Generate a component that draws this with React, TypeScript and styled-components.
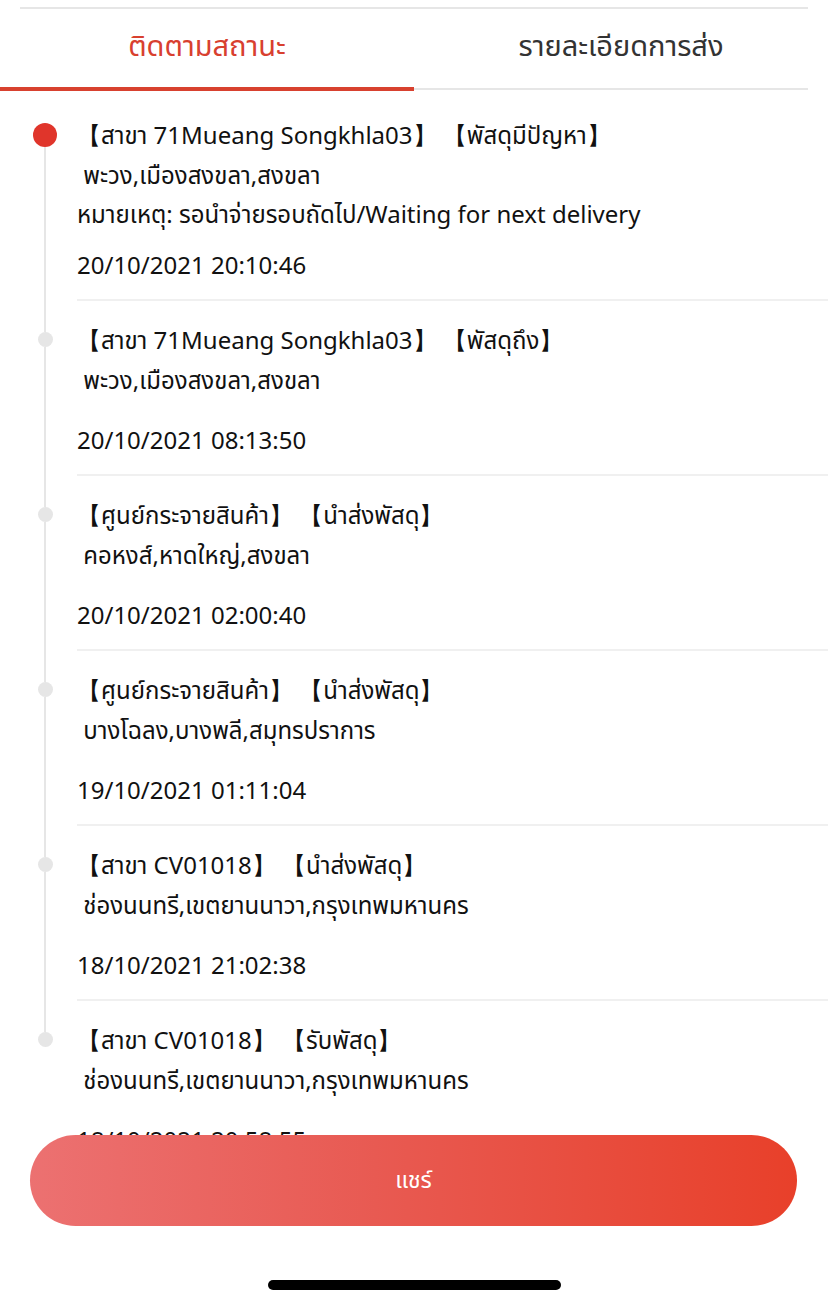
import React from 'react';
import styled, {createGlobalStyle} from 'styled-components';

const GlobalStyle = createGlobalStyle`
  html, body {
    margin: 0;
    padding: 0;
    background: #fff;
  }
  body {
    font-family: "Noto Sans", "Noto Sans Thai", "Liberation Sans", sans-serif;
    color: #111;
  }
`;

const Page = styled.div`
  position: relative;
  width: 828px;
  height: 1305px;
  overflow: hidden;
  background: #fff;
  display: flex;
  flex-direction: column;
`;

const TopRule = styled.div`
  height: 2px;
  margin: 7px 20px 0 20px;
  background: #e6e6e6;
`;

const Tabs = styled.div`
  display: flex;
  height: 78px;
`;

const Tab = styled.div<{ $active?: boolean }>`
  flex: 1;
  display: flex;
  align-items: center;
  justify-content: center;
  padding-bottom: 2px;
  font-size: 29px;
  color: ${p => (p.$active ? '#d8402f' : '#333')};
`;

const Indicator = styled.div`
  display: flex;
  align-items: center;
  height: 4px;
`;

const ActiveBar = styled.div`
  width: 50%;
  height: 4px;
  background: #d8412f;
`;

const RestBar = styled.div`
  flex: 1;
  height: 2px;
  margin-right: 20px;
  background: #e6e6e6;
`;

const List = styled.div`
  flex: 1;
  overflow: hidden;
  padding-top: 5px;
`;

const Row = styled.div`
  display: flex;
`;

const Rail = styled.div<{ $first?: boolean; $last?: boolean; $big?: boolean }>`
  width: 64px;
  padding-left: 13px;
  display: flex;
  flex-direction: column;
  align-items: center;
  flex-shrink: 0;

  > .up {
    width: 2px;
    height: ${p => (p.$big ? 27 : 31)}px;
    background: ${p => (p.$first ? 'transparent' : '#e6e6e6')};
  }

  > .down {
    width: 2px;
    flex: 1;
    background: ${p => (p.$last ? 'transparent' : '#e6e6e6')};
  }
`;

const Dot = styled.div<{ $current?: boolean }>`
  width: ${p => (p.$current ? 24 : 15)}px;
  height: ${p => (p.$current ? 24 : 15)}px;
  border-radius: 50%;
  background: ${p => (p.$current ? '#e0352b' : '#e6e6e6')};
  flex-shrink: 0;
`;

const Body = styled.div<{ $last?: boolean }>`
  flex: 1;
  padding: 19px 0 14px 0;
  border-bottom: 2px solid ${p => (p.$last ? 'transparent' : '#f0f0f0')};
  font-size: 24px;
  line-height: 40px;
  color: #111;
  white-space: pre;

  > .note {
    line-height: 38px;
  }
`;

const Stamp = styled.div<{ $gap: number }>`
  margin-top: ${p => p.$gap}px;
`;

const Footer = styled.div`
  position: absolute;
  left: 0;
  right: 0;
  bottom: 0;
  display: flex;
  flex-direction: column;
`;

const ShareButton = styled.button`
  margin: 0 31px 0 30px;
  height: 91px;
  border: none;
  border-radius: 46px;
  background: linear-gradient(90deg, #ec7171 0%, #e85a52 45%, #e8402a 100%);
  color: #fff;
  font-family: inherit;
  font-size: 23px;
  cursor: pointer;
`;

const HomeArea = styled.div`
  height: 79px;
  background: #fff;
  display: flex;
  justify-content: center;
  padding-top: 54px;
  box-sizing: border-box;
`;

const HomeBar = styled.div`
  width: 293px;
  height: 10px;
  border-radius: 5px;
  background: #000;
`;

type Event = {
  title: string;
  place: string;
  note?: string;
  time: string;
};

const events: Event[] = [
  {
    title: '【สาขา 71Mueang Songkhla03】 【พัสดุมีปัญหา】',
    place: ' พะวง,เมืองสงขลา,สงขลา',
    note: 'หมายเหตุ: รอนำจ่ายรอบถัดไป/Waiting for next delivery',
    time: '20/10/2021 20:10:46',
  },
  {
    title: '【สาขา 71Mueang Songkhla03】 【พัสดุถึง】',
    place: ' พะวง,เมืองสงขลา,สงขลา',
    time: '20/10/2021 08:13:50',
  },
  {
    title: '【ศูนย์กระจายสินค้า】 【นำส่งพัสดุ】',
    place: ' คอหงส์,หาดใหญ่,สงขลา',
    time: '20/10/2021 02:00:40',
  },
  {
    title: '【ศูนย์กระจายสินค้า】 【นำส่งพัสดุ】',
    place: ' บางโฉลง,บางพลี,สมุทรปราการ',
    time: '19/10/2021 01:11:04',
  },
  {
    title: '【สาขา CV01018】 【นำส่งพัสดุ】',
    place: ' ช่องนนทรี,เขตยานนาวา,กรุงเทพมหานคร',
    time: '18/10/2021 21:02:38',
  },
  {
    title: '【สาขา CV01018】 【รับพัสดุ】',
    place: ' ช่องนนทรี,เขตยานนาวา,กรุงเทพมหานคร',
    time: '18/10/2021 20:58:55',
  },
];

function App() {
  return (
    <Page>
      <GlobalStyle/>
      <TopRule/>
      <Tabs>
        <Tab $active>ติดตามสถานะ</Tab>
        <Tab>รายละเอียดการส่ง</Tab>
      </Tabs>
      <Indicator>
        <ActiveBar/>
        <RestBar/>
      </Indicator>
      <List>
        {events.map((e, i) => {
          const first = i === 0;
          const last = i === events.length - 1;
          return (
            <Row key={e.time}>
              <Rail $first={first} $last={last} $big={first}>
                <div className="up"/>
                <Dot $current={first}/>
                <div className="down"/>
              </Rail>
              <Body $last={last}>
                <div>{e.title}</div>
                <div>{e.place}</div>
                {e.note && <div className="note">{e.note}</div>}
                <Stamp $gap={e.note ? 12 : 20}>{e.time}</Stamp>
              </Body>
            </Row>
          );
        })}
      </List>
      <Footer>
        <ShareButton>แชร์</ShareButton>
        <HomeArea>
          <HomeBar/>
        </HomeArea>
      </Footer>
    </Page>
  );
}

export default App;
